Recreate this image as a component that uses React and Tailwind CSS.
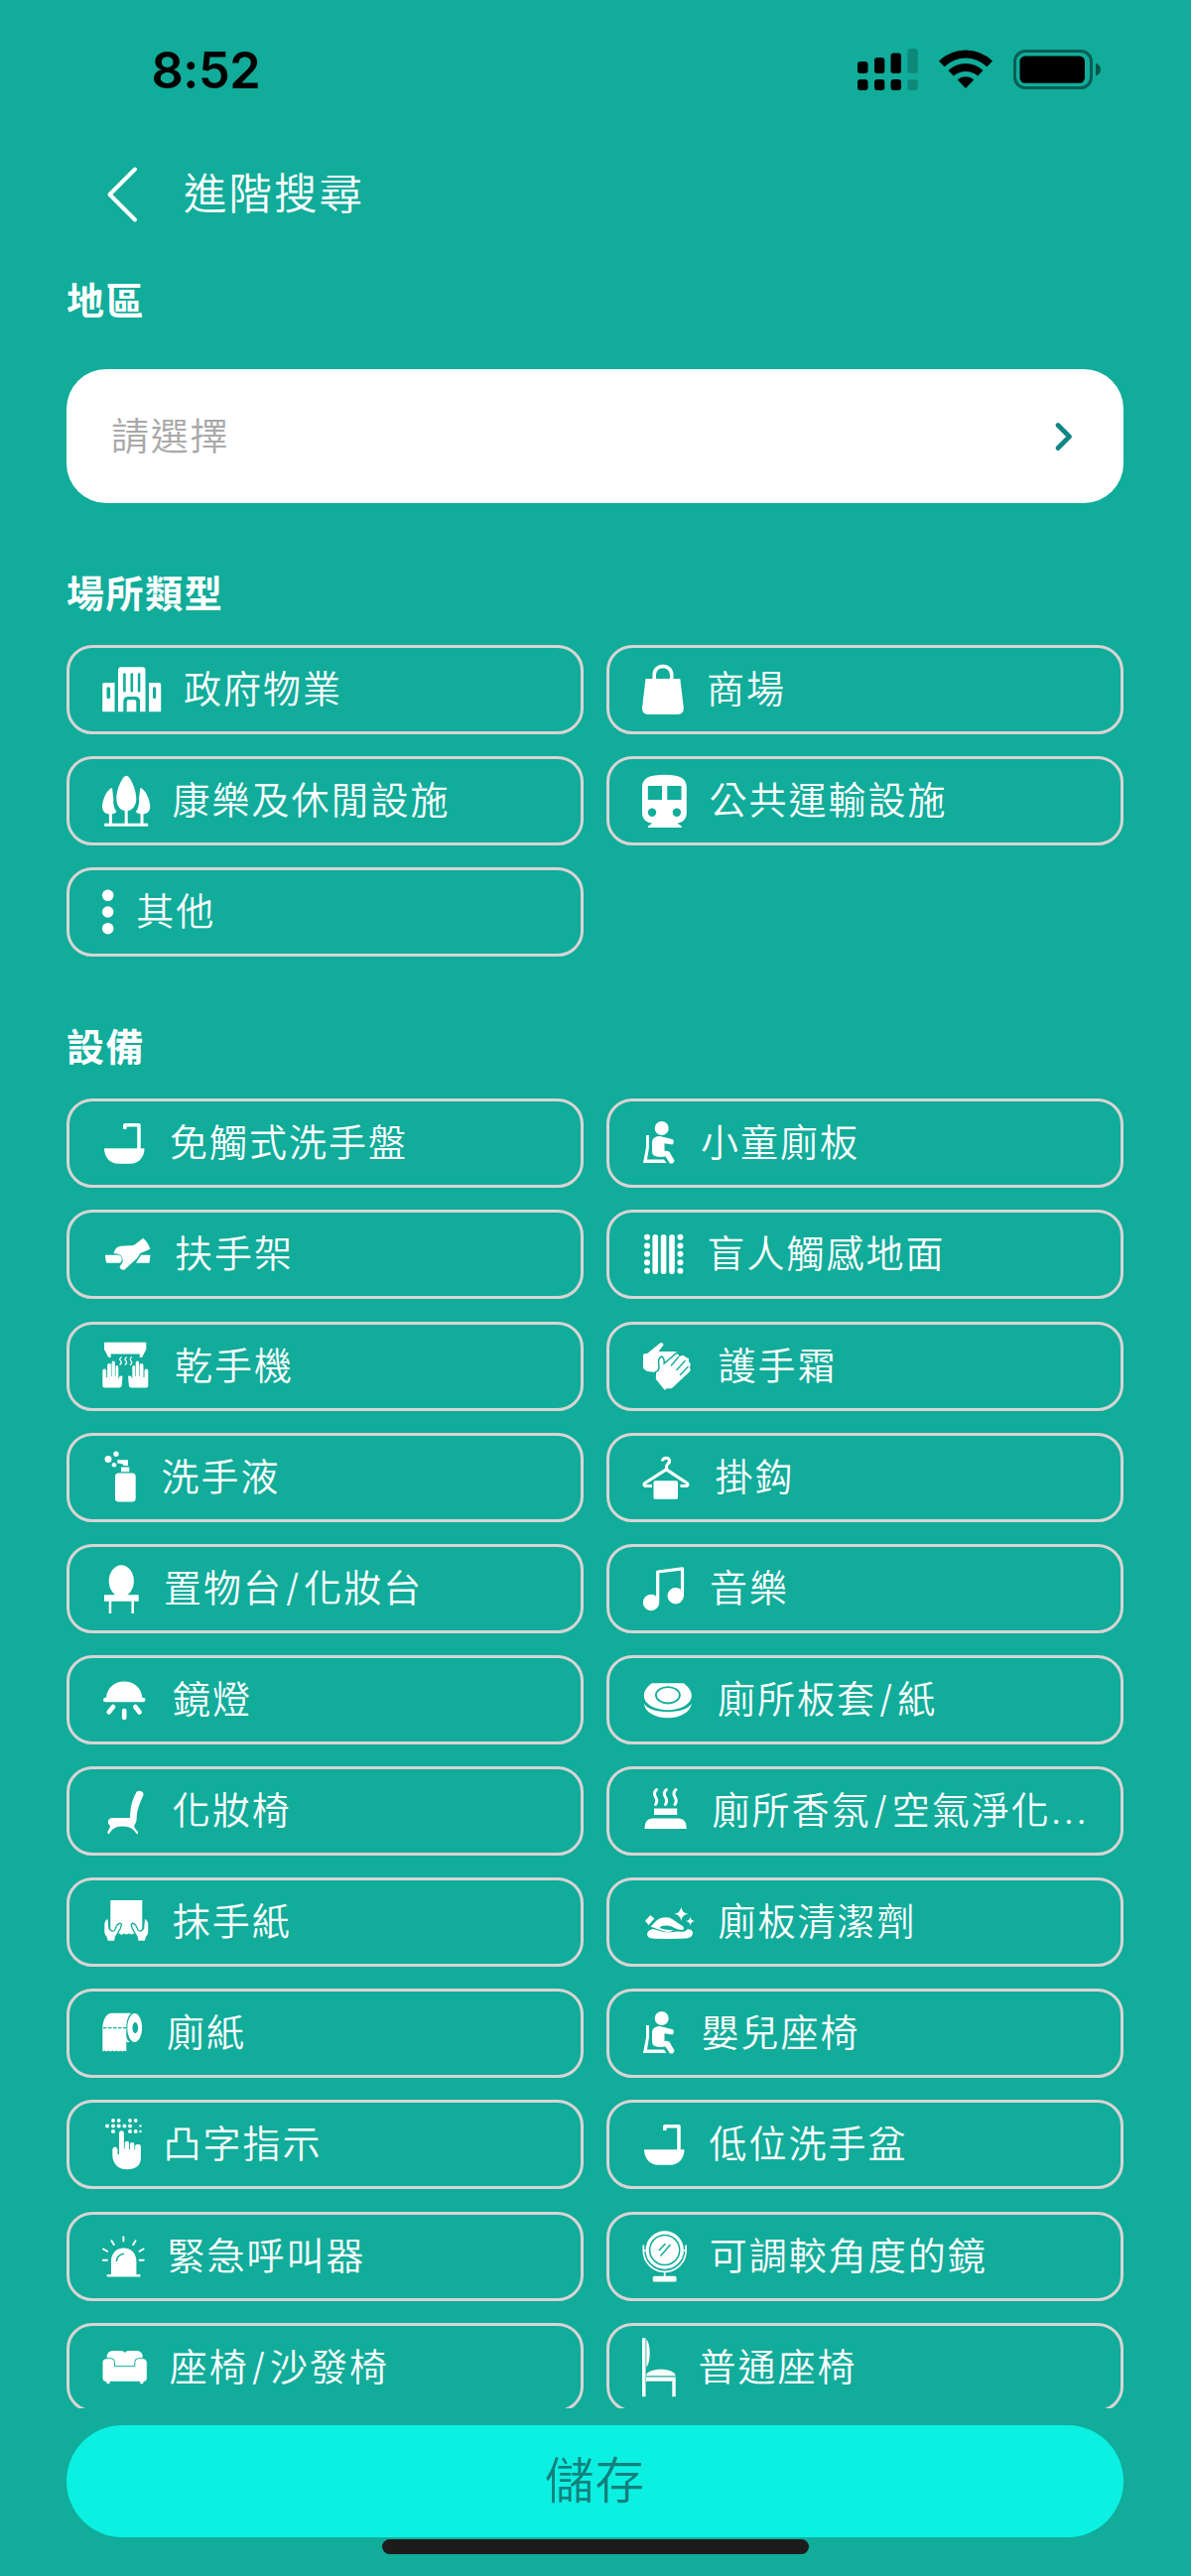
import { useState } from "react";
import clsx from "clsx";

const BG = "#11ac9a";

// All option icons are drawn on an 84px tall canvas, the inner height of a chip
const Icon = ({ width, children }) => (
  <svg
    width={width}
    height="84"
    viewBox={`0 0 ${width} 84`}
    fill="white"
    className="shrink-0 overflow-visible"
    aria-hidden="true"
  >
    {children}
  </svg>
);

const Building = () => (
  <g>
    <path
      fillRule="evenodd"
      d="M3.2 37q0-2 2-2h10.3v29.3H3.2zM7.5 41v8.500q0 1.800 1.800 1.800t1.800-1.800V41q0-1.800-1.800-1.800T7.500 41z"
    />
    <path d="M19 22.300q0-3 3-3h21.500q3 0 3 3v42h-5.400V54q0-5-5-5h-6.800q-5 0-5 5v10.300H19z" />
    <path
      fillRule="evenodd"
      d="M50 35h10.200q2 0 2 2v27.300H50zM54 41v8.500q0 1.800 1.600 1.800t1.600-1.800V41q0-1.800-1.600-1.800T54 41z"
    />
    <path d="M27.700 54.300q0-2 2-2h5.600q2 0 2 2v10h-9.600z" />
    <path d="M25.400 26.500v16.800M32.800 26.500v16.800M40.100 26.500v16.800" stroke={BG} strokeWidth="2.600" strokeLinecap="round" />
  </g>
);

const Trees = () => (
  <g>
    <path d="M27.300 16.700c4 0 10 14 10 23 0 7-4 12.600-10 12.600s-10-5.600-10-12.600c0-9 6-23 10-23z" />
    <path d="M13 29c-5 1-10 12-10 19 0 5 3.500 7.500 8.300 7.500 3 0 5-1 6.200-2.500-3-3.500-3.500-8-3.200-13z" />
    <path d="M41.300 29c5 1 10 12 10 19 0 5-3.500 7.500-8.300 7.500-3 0-5-1-6.200-2.500 3-3.500 3.500-8 3.200-13z" />
    <path d="M11.400 52v14M27.200 50v16M43 52v14M5.200 66.300h44" stroke="white" strokeWidth="3" fill="none" />
  </g>
);

const Dots = () => (
  <g>
    <circle cx="8.700" cy="25.300" r="5.800" />
    <circle cx="8.700" cy="42" r="5.800" />
    <circle cx="8.700" cy="58.700" r="5.800" />
  </g>
);

const Bag = () => (
  <g>
    <path d="M6.500 31h34.800L44.800 60q.3 7-6 7H9q-6.300 0-6-7z" />
    <path d="M15.200 33v-6c0-11.500 17.500-11.500 17.500 0v6" fill="none" stroke="white" strokeWidth="3.600" />
  </g>
);

const Train = () => (
  <g>
    <path
      fillRule="evenodd"
      d="M25.400 15.700c15 0 22.400 3.500 22.400 12.300v26c0 6.500-4 10-9.500 10.500l4.600 3.300V69H8.800v-1.200l4.500-3.300C7 64 3 60.500 3 54V28c0-8.800 7.400-12.300 22.400-12.300zM8.800 27v14H23V27zm19.500 0v14h14.200V27zM13 49.500a4.200 4.200 0 1 0 0 8.400 4.200 4.200 0 0 0 0-8.400zm24.900 0a4.200 4.200 0 1 0 0 8.400 4.200 4.200 0 0 0 0-8.400z"
    />
  </g>
);

const Sink = () => (
  <g>
    <path d="M5 47.200h40.500c0 9-6 15.500-14 15.500H19c-8 0-14-6.500-14-15.500z" />
    <path d="M25.800 28v-4.200H40V48" fill="none" stroke="white" strokeWidth="3.500" strokeLinejoin="round" />
  </g>
);

const Handrail = () => (
  <g>
    <path d="M6 42.800h14c3.500 2 3.500 6 1 8H7.300Q6 47 6 42.800zM42 42.800h9.500l-1 8H37z" />
    <path d="M14.500 41c1.500-5 4-7.200 8-7.200l11-.8q2 0 4.500-2.500l6.300-4.700q5 4.500 7 11L41 41.200l-2.300 4.300L25.500 57.600q-4 .5-5-3.200l3-4.400q1-5-3.500-8z" />
  </g>
);

const DryerHand = () => (
  <g>
    <path d="M3.300 46.500q0-2 1.900-2t1.900 2V53h1V41q0-2 1.900-2t1.900 2v11h.6V38.500q0-2 1.700-2t1.700 2V52h.6V43q0-2 1.400-2t1.400 2v11.500l1.200-2.500q1-1 3-.3l-.7 9q-.3 2.700-3 2.700H5.300q-2 0-2-2z" />
  </g>
);

const HandDryer = () => (
  <g>
    <path d="M5 17.700h42.300V25L43 33h-2.200v-3.500H11.600V33H9.400L5 25z" />
    <path
      d="M22.500 32.500q-3 2 -1 4t-1 4M27.800 32.500q-3 2-1 4t-1 4M33 32.500q-3 2-1 4t-1 4"
      fill="none"
      stroke="white"
      strokeWidth="1.300"
    />
    <DryerHand />
    <g transform="matrix(-1 0 0 1 52.600 0)">
      <DryerHand />
    </g>
  </g>
);

const SeatedChild = () => (
  <g>
    <circle cx="22.700" cy="27" r="7" />
    <path d="M7 34h3v12L8 58.500h17l2.500 3.500H4l3-16z" />
    <path d="M13 42c0-5 3-7 8-7l13 3.200q1.800 3-.5 5.200l-8-1.200V50q2.500-.6 5 .8l5 8.700q-.5 3.700-4.500 3l-4.500-7q-14 2-13.500-5.500z" />
  </g>
);

const Tactile = () => (
  <g>
    {[24.8, 33.4, 41.8, 50.2, 58.8].map((y) => (
      <g key={y}>
        <circle cx="8" cy={y} r="3" />
        <circle cx="41.400" cy={y} r="3" />
      </g>
    ))}
    <path d="M16.200 24.700v34.500M24.600 24.700v34.500M33 24.700v34.500" stroke="white" strokeWidth="5.600" strokeLinecap="round" />
  </g>
);

const HandCream = () => (
  <g>
    <path d="M4 29.800l4.500-1L21 18.500q3.500-1 3.500 2l-5 6.500h16q4 .5 5 3L28 45l-11 3-9-1-4-3z" />
    <path
      d="M16.500 47.500q5-1 3-9 0-5 3-6.500 3 1 2.700 7l12-10q3-1 3.500 2 5-2 7 1.500 4 0 3 4.500 3 2 1 6.500 2 2-.5 4.500L33 65H28q-2 3-4 0l-8-10z"
      stroke={BG}
      strokeWidth="1.500"
    />
    <path d="M40 32l-8 9.500M46.500 36l-9 10M49.500 42l-8.500 9" stroke={BG} strokeWidth="1.300" fill="none" />
  </g>
);

const SoapBottle = () => (
  <g>
    <circle cx="9" cy="23.500" r="3.500" />
    <circle cx="17" cy="18.300" r="2.700" />
    <circle cx="15" cy="29.300" r="2.300" />
    <path d="M18.300 24.200H29V30h-4.500q-.5-2-3-2l-3.200-.5zM22 31.600h8.300v4.600H22z" />
    <rect x="16" y="37.600" width="20.700" height="29" rx="3.500" />
  </g>
);

const Vanity = () => (
  <g>
    <ellipse cx="22.300" cy="34.300" rx="12.600" ry="16" />
    <path d="M5 48.300h12q2.500 0 3-2h4.600q.5 2 3 2h12.100v6.500H5z" />
    <path d="M11 54v13M33.700 54v13" stroke="white" strokeWidth="2.500" />
  </g>
);

const MirrorLamp = () => (
  <g>
    <path d="M7 41c0-23.500 36.300-23.500 36.300 0z" />
    <path d="M6.300 42h37.900M14 49l-4.300 5.500M25.200 53v7M36.300 49l4.300 5.500" stroke="white" strokeWidth="4.600" strokeLinecap="round" />
  </g>
);

const MakeupChair = () => (
  <g>
    <path d="M37 24c1-4 8.500-2.500 7.500 2-4 9-6.500 15-6.800 23q0 5-2.500 7.500-.5 2.500 3.800 6.500.5 3-1.500 2C35 60.500 31 57.500 23.500 57.500S12 61 10 65.300q-2 0-1.700-2l3-6c-3.500-2-3.500-8 2-8.200H31c.3-9.500 1.500-17 6-25.100z" />
  </g>
);

const PaperHand = () => (
  <path
    d="M4.700 43q1-4 4.500-5l.8 10.500q3.500 4.500 5.500 1.500l2.500-5q3.500-3.500 4.500 0l-1.500 4-4.500 8-.8 4.300H8.200L7 57q-3-3-2.300-8z"
    stroke={BG}
    strokeWidth="1.300"
  />
);

const PaperTowel = () => (
  <g>
    <path d="M11.300 20h32v33l-4.500 1-2 1-2-1.500-2.500 1-2.500-1-2.500 1-2.500-1-2.500 1.500-2-1.500-9-2z" />
    <PaperHand />
    <g transform="matrix(-1 0 0 1 54.600 0)">
      <PaperHand />
    </g>
  </g>
);

const ToiletRoll = () => (
  <g>
    <path d="M32 21.800H12Q4.500 23 3.300 36v24.400l2-1 2 1 2-1 2 1 2-1 2 1 2-1 2 1 2-1 2 1 2-1 2 1V37q0-11 4.700-15.200z" />
    <path d="M27.300 45q1 5 4 6h-4z" />
    <path
      fillRule="evenodd"
      d="M35.700 22c4 0 7.400 6.500 7.400 14.500S39.700 51 35.700 51s-7.400-6.500-7.400-14.500S31.700 22 35.700 22zm.6 9c-1.500 0-2.800 2.500-2.800 5.500s1.300 5.500 2.800 5.500 2.800-2.500 2.800-5.500-1.300-5.500-2.800-5.500z"
    />
    <path d="M4 36.700h23.500" stroke={BG} strokeWidth="1.200" strokeDasharray="3.500 1.500" />
  </g>
);

const Braille = () => (
  <g>
    {[14, 19.7, 31, 36.7].map((x) => (
      <circle key={x} cx={x} cy="18" r="1.900" />
    ))}
    {[8, 14, 19.7, 25.4, 31, 41.5].map((x) => (
      <circle key={x} cx={x} cy="23.400" r={x > 40 ? 1.2 : 2} />
    ))}
    {[14, 31, 36.7, 41.5].map((x) => (
      <circle key={x} cx={x} cy="29" r={x > 40 ? 1.2 : 2} />
    ))}
    <path d="M20 31q0-2.700 2.400-2.700T24.900 31v15.500h.8V41q0-2.300 2.200-2.300t2.200 2.300v6h.9v-5q0-2 2.200-2t2.200 2v5.500h.7V44q0-2 2.300-2h1.500q2 0 2 2v12c0 7-5 11.300-14 11.300S13.300 61 13.300 53v-6q.5-2.500 2.500-2.500t2.700 2.500v5H20z" />
  </g>
);

const Alarm = () => (
  <g>
    <path d="M12 60V46.500c0-17.500 25.400-17.500 25.400 0V60h4v2.500H7.700V60z" />
    <path
      d="M24.400 21.500v5.700M12 25.500l3.200 5.300M37 25.500l-3.200 5.300M3.300 34l5.500 3.200M45.300 34l-5.500 3.200M3 45.800h5.700M39.800 45.800h5.700"
      stroke="white"
      strokeWidth="1.900"
    />
    <path d="M17.300 47q.5-6.500 7.700-7.700" fill="none" stroke={BG} strokeWidth="1.400" />
  </g>
);

const Sofa = () => (
  <g>
    <path d="M7.700 31.500q0-6.500 6-6.500h8q3 0 4 2 1-2 4-2h8q6 0 6 6.500V42H7.700z" />
    <path
      d="M3 36.500q0-3.800 4-3.800h5q3.500 0 3.500 4v4h20.300v-4q0-4 3.500-4h5q4 0 4 3.800V53q0 3.500-3.500 3.500v2.300h-4v-2.500H11v2.500H7v-2.300q-4 0-4-3.500z"
      stroke={BG}
      strokeWidth="1"
    />
  </g>
);

const Hanger = () => (
  <g>
    <path
      d="M23.500 25.500c0-4.500 8-4 7 .5-.6 2.300-3.300 2.500-3 5.500v3.500M13 50.500H6q-2-1.500 0-3l21.300-13.700L48 47.500q2 1.500 0 3h-6.500"
      fill="none"
      stroke="white"
      strokeWidth="3.200"
      strokeLinejoin="round"
    />
    <rect x="14.500" y="45.300" width="24.500" height="18.500" rx="1.500" />
  </g>
);

const Music = () => (
  <g>
    <circle cx="12" cy="56" r="8.200" />
    <circle cx="36.700" cy="49.300" r="8.200" />
    <path d="M18.700 56V25L43.500 21.800v27" fill="none" stroke="white" strokeWidth="3.200" strokeLinejoin="round" />
  </g>
);

const SeatCover = () => (
  <g>
    <path d="M13 25.200h31.500c3 2 8.300 6.500 8.300 12.500 0 8-10 14.500-24 14.500s-24-6.500-24-14.500C4.800 31.700 10 27.200 13 25.200z" />
    <path d="M4.800 45.500c5 11.500 43 11.500 48 0C52 54 42 60.300 28.800 60.300S5.500 54 4.800 45.500z" />
    <ellipse cx="28.900" cy="37.300" rx="12" ry="8.200" fill="none" stroke={BG} strokeWidth="1.800" />
  </g>
);

const Aroma = () => (
  <g>
    <path
      d="M17.500 20.500q-3.500 3.500-1 7.500t0 7.500M27.400 20.500q-3.500 3.500-1 7.500t0 7.500M37 20.500q-3.500 3.500-1 7.500t0 7.500"
      fill="none"
      stroke="white"
      strokeWidth="3"
      strokeLinecap="round"
    />
    <path d="M15 39.400h23.200V46H15zM5.400 59.900q0-10.500 8-10.500h26.400q8 0 8 10.500z" />
  </g>
);

const Cleaner = () => (
  <g>
    <path d="M6 40.700L11.300 35l4 3.500-5.800 6.500z" />
    <path d="M11.500 46.500L18 40q3-2.500 9-2.800 4-.2 7 2.200l10 6.800q2 1.800.5 3.300-4 .8-7-.7l-5-2.300q-4-1.500-10-.5-2 1.500 0 2.500 6 2 12 1.500-2.500 2.600-7 2l-8.500-2.700z" />
    <path d="M14 49l10 2.700q8 1.300 13-.2l7.500.3q3-1 4-2.500Q54 49 54 53.500q-1 5-8.500 5l-14 .5-16.500-.3Q8 58.500 8 54q.5-4 6-5z" />
    <path d="M42.300 26.700q.8 6 7 7-6.200 1-7 7-.8-6-7-7 6.200-1 7-7zM51.500 36.500q.5 4 4.500 4.600-4 .6-4.500 4.600-.5-4-4.500-4.600 4-.6 4.500-4.600z" />
    <path d="M32.500 47h-9q-2.500.5-2 1.500" fill="none" stroke={BG} strokeWidth="1.200" />
  </g>
);

const TiltMirror = () => (
  <g>
    <circle cx="25.700" cy="35.500" r="17.500" fill="none" stroke="white" strokeWidth="3.400" />
    <circle cx="25.700" cy="35.500" r="14.300" />
    <path d="M4.300 30.500v5.500a21.400 21.400 0 0 0 42.800 0v-5.500M4 36h4M43.500 36h4M25.700 57v6" fill="none" stroke="white" strokeWidth="1.700" />
    <rect x="13.800" y="61.700" width="23.700" height="5.800" rx="1.500" />
    <path d="M20 36l6.500-7M21.500 41.500l10-11.500" stroke={BG} strokeWidth="1.500" />
  </g>
);

const PlainChair = () => (
  <g>
    <path d="M3 12.300h3.500v59H3zM33.300 55h3.400v16.300h-3.400z" />
    <path d="M7.300 13.500c4.500 5 4.500 23 0 28z" />
    <path d="M7 50.500c0-9 29.700-9 29.700 0zM7 51.300h29.700v4.500H7z" />
    <path d="M7 51h29.700" stroke={BG} strokeWidth=".8" />
  </g>
);

const placeTypes = [
  { label: "政府物業", icon: Building, width: 61 },
  { label: "商場", icon: Bag, width: 44 },
  { label: "康樂及休閒設施", icon: Trees, width: 49.5 },
  { label: "公共運輸設施", icon: Train, width: 46.5 },
  { label: "其他", icon: Dots, width: 13.3 },
];

const facilities = [
  { label: "免觸式洗手盤", icon: Sink, width: 47 },
  { label: "小童廁板", icon: SeatedChild, width: 38 },
  { label: "扶手架", icon: Handrail, width: 52 },
  { label: "盲人觸感地面", icon: Tactile, width: 44.5 },
  { label: "乾手機", icon: HandDryer, width: 52 },
  { label: "護手霜", icon: HandCream, width: 55.5 },
  { label: "洗手液", icon: SoapBottle, width: 38.5 },
  { label: "掛鈎", icon: Hanger, width: 52.5 },
  { label: "置物台/化妝台", icon: Vanity, width: 41 },
  { label: "音樂", icon: Music, width: 47 },
  { label: "鏡燈", icon: MirrorLamp, width: 50 },
  { label: "廁所板套/紙", icon: SeatCover, width: 55 },
  { label: "化妝椅", icon: MakeupChair, width: 49.7 },
  { label: "廁所香氛/空氣淨化...", icon: Aroma, width: 49.5 },
  { label: "抹手紙", icon: PaperTowel, width: 49.7 },
  { label: "廁板清潔劑", icon: Cleaner, width: 55.5 },
  { label: "廁紙", icon: ToiletRoll, width: 44 },
  { label: "嬰兒座椅", icon: SeatedChild, width: 38.5 },
  { label: "凸字指示", icon: Braille, width: 40.5 },
  { label: "低位洗手盆", icon: Sink, width: 46.5 },
  { label: "緊急呼叫器", icon: Alarm, width: 44.5 },
  { label: "可調較角度的鏡", icon: TiltMirror, width: 46.8 },
  { label: "座椅/沙發椅", icon: Sofa, width: 46.8 },
  { label: "普通座椅", icon: PlainChair, width: 35.5 },
];

const StatusBar = () => (
  <div className="flex h-[140px] shrink-0 items-center justify-between pl-[152.500px] pr-[90px] text-black">
    <span className="pt-[3px] text-[50.500px] font-semibold leading-none tracking-[-0.500px]">8:52</span>
    <svg width="247" height="44" viewBox="863 48 247 44" aria-hidden="true">
      <rect x="864" y="62" width="10.500" height="12" rx="3" />
      <rect x="881" y="58" width="10.300" height="16" rx="3" />
      <rect x="897.500" y="53.500" width="10.500" height="20.500" rx="3" />
      <rect x="914.300" y="49" width="10.500" height="25" rx="3" opacity=".2" />
      <rect x="864" y="80" width="10.500" height="11" rx="3" />
      <rect x="881" y="80" width="10.300" height="11" rx="3" />
      <rect x="897.500" y="80" width="10.500" height="11" rx="3" />
      <rect x="914.300" y="80" width="10.500" height="11" rx="3" opacity=".2" />
      <path d="M946 61.500q11.500-11 27-11t27 11l-5.500 5.700q-9.500-8.800-21.500-8.800t-21.500 8.800z" />
      <path d="M955.500 71q7.500-7 17.500-7t17.500 7l-5.300 5.500q-5.200-4.500-12.200-4.500t-12.200 4.500z" />
      <path d="M964.800 80.500q3.500-3.300 8.200-3.300t8.200 3.300L973 89z" />
      <rect x="1022.500" y="51.500" width="77" height="37" rx="10.500" fill="none" stroke="black" strokeOpacity=".45" strokeWidth="3" />
      <rect x="1027.500" y="56.500" width="65.500" height="27.300" rx="5.500" />
      <path d="M1104 63.500q5 2 5 6.500t-5 6.500z" opacity=".5" />
    </svg>
  </div>
);

const Chip = ({ label, icon: Glyph, width, selected, onClick }) => {
  const [name, alt] = label.split("/");

  return (
    <button
      type="button"
      aria-pressed={selected}
      onClick={onClick}
      className={clsx(
        "flex h-[90px] min-w-0 items-center gap-6 rounded-[26px] border-3 border-[#d9d4d5] pl-[30px] text-left text-[38px] font-[350] leading-none tracking-[2px] whitespace-nowrap text-white",
        selected && "bg-white/20"
      )}
    >
      <Icon width={width}>
        <Glyph />
      </Icon>
      <span className="pb-[2px]">
        {name}
        {alt && <span className="px-[3px]">/</span>}
        {alt}
      </span>
    </button>
  );
};

const ChipGroup = ({ items, selected, onToggle }) => (
  <div className="grid grid-cols-2 gap-x-[23px] gap-y-[22.130px]">
    {items.map((item) => (
      <Chip
        key={item.label}
        {...item}
        selected={selected.includes(item.label)}
        onClick={() => onToggle(item.label)}
      />
    ))}
  </div>
);

const SectionTitle = ({ children }) => (
  <h2 className="text-[38px] font-bold leading-[52px] tracking-[1.600px] text-white">{children}</h2>
);

function App() {
  const [selected, setSelected] = useState([]);

  const toggle = (label) => {
    setSelected((prev) => (prev.includes(label) ? prev.filter((l) => l !== label) : [...prev, label]));
  };

  return (
    <div className="flex h-[2596px] w-[1200px] flex-col bg-[#11ac9a] font-[Inter,'Noto_Sans_CJK_TC',sans-serif]">
      <StatusBar />

      <header className="flex h-[112px] shrink-0 items-center pl-[106px] text-white">
        <button type="button" aria-label="返回">
          <svg width="34" height="58" viewBox="0 0 34 58" fill="none" stroke="white" strokeWidth="4" strokeLinecap="round" strokeLinejoin="round">
            <path d="M30 3.500L4.500 29 30 54.500" />
          </svg>
        </button>
        <h1 className="ml-[45px] text-[43.500px] font-[350] leading-none tracking-[2px]">進階搜尋</h1>
      </header>

      <main className="flex h-[2175px] shrink-0 flex-col overflow-hidden pt-[25px] pr-[68px] pl-[67px]">
        <SectionTitle>地區</SectionTitle>
        <button
          type="button"
          className="mt-[43px] flex h-[135px] shrink-0 items-center justify-between rounded-[40px] bg-white pl-[45px] pr-[48px] text-[38px] font-[350] tracking-[1.700px] text-[#a9a9a9]"
        >
          <span className="pb-px">請選擇</span>
          <svg width="24" height="32" viewBox="0 0 24 32" fill="none" stroke="#128585" strokeWidth="4.800" strokeLinecap="round" strokeLinejoin="round">
            <path d="M6 4.500L17.500 16 6 27.500" />
          </svg>
        </button>

        <div className="mt-[65px] mb-[26px]">
          <SectionTitle>場所類型</SectionTitle>
        </div>
        <ChipGroup items={placeTypes} selected={selected} onToggle={toggle} />

        <div className="mt-[65px] mb-[26px]">
          <SectionTitle>設備</SectionTitle>
        </div>
        <ChipGroup items={facilities} selected={selected} onToggle={toggle} />
      </main>

      <footer className="flex flex-col items-center pt-[17px] pr-[68px] pl-[67px]">
        <button
          type="button"
          className="h-[112.500px] w-full rounded-full bg-[#0cf0e2] text-[49.500px] font-[350] leading-none tracking-[1px] text-[#13807c]"
        >
          儲存
        </button>
        <div className="mt-[2.500px] h-[14.500px] w-[430px] rounded-full bg-[#1c1c1c]" />
      </footer>
    </div>
  );
}

export default App;
